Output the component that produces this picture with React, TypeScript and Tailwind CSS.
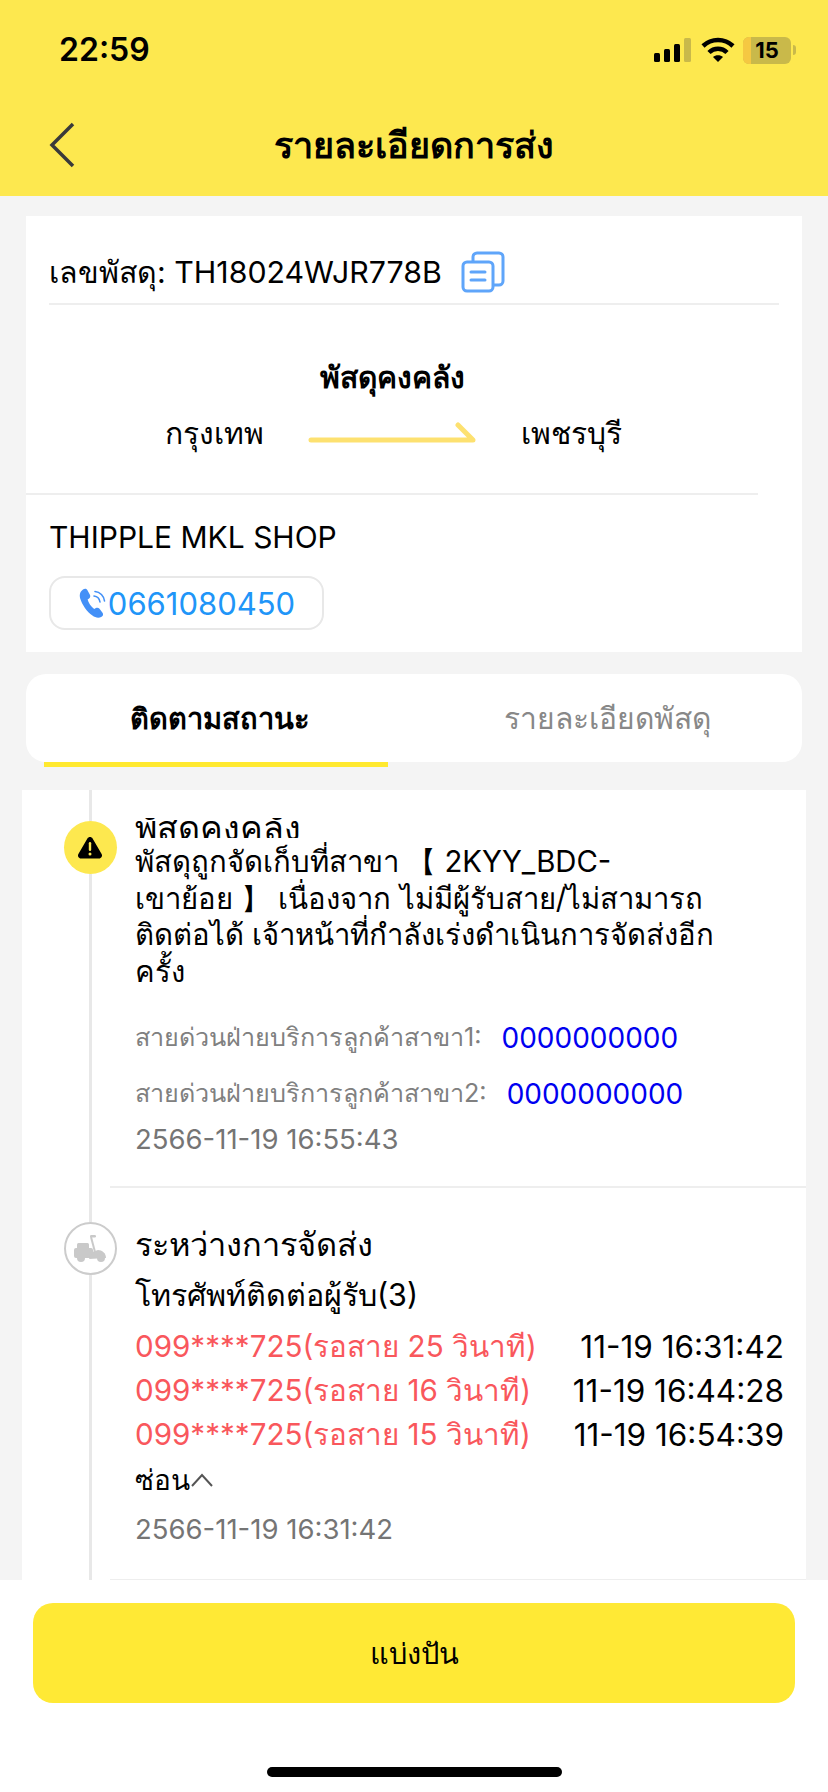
const font = "font-['Inter','Noto_Sans','Liberation_Sans',sans-serif]";

const CopyIcon = () => (
  <svg width="44" height="42" viewBox="0 0 44 42" fill="none" stroke="#5fa5fa" strokeWidth="3">
    <rect x="2" y="11" width="30" height="29" rx="4" />
    <path d="M12 11V6a4 4 0 0 1 4-4h22a4 4 0 0 1 4 4v24a4 4 0 0 1-4 4h-6" />
    <path d="M10 21h14M10 29h14" strokeLinecap="round" />
  </svg>
);

const PhoneIcon = () => (
  <svg width="30" height="30" viewBox="0 0 30 30" fill="none">
    <path
      d="M5 1.500c1.600-1.200 3.400-1 4.300.6l2.600 4.700c.7 1.300.4 2.700-.8 3.600l-1.500 1.100c.8 3.300 3.600 7.400 6.600 9.400l1.700-.9c1.300-.7 2.700-.4 3.600.8l3 4c1 1.500.6 3.100-.9 4-3 1.700-6.300.9-9.200-1.200C9 24 4 16.500 2.200 10.500 1 6.500 2.300 3.300 5 1.500z"
      fill="#4390f7"
    />
    <path d="M16 8c3 .3 5.500 2.800 6 6M17 3.500c5 .4 9 4.500 9.500 9.500" stroke="#4390f7" strokeWidth="1.600" strokeLinecap="round" />
  </svg>
);

const ScooterIcon = () => (
  <svg width="32" height="27" viewBox="0 0 32 27" fill="#c9c9c9">
    <rect x="3" y="8" width="12" height="8" rx="1.500" />
    <rect x="0" y="13" width="19" height="10" rx="2" />
    <circle cx="7" cy="23" r="4" />
    <circle cx="27" cy="23" r="4" />
    <path d="M15 24l3-7 6-2c4 0 8 3 8 8z" />
    <path d="M17 2l4 15" stroke="#c9c9c9" strokeWidth="2" fill="none" />
    <rect x="16" y="0" width="6" height="2.500" rx="1.200" />
  </svg>
);

const WarningIcon = () => (
  <svg width="26" height="24" viewBox="0 0 26 24">
    <path
      d="M10.400 2.500c1.200-2 4-2 5.200 0l9 15.500c1.200 2-.3 4.500-2.600 4.500H4c-2.300 0-3.800-2.500-2.600-4.500z"
      fill="#000"
    />
    <rect x="11.800" y="6" width="2.400" height="9" rx="1.200" fill="#fde84f" />
    <circle cx="13" cy="18" r="1.500" fill="#fde84f" />
  </svg>
);

const StatusIcons = () => (
  <div className="flex items-center">
    <svg width="38" height="24" viewBox="0 0 38 24" className="mr-[9px]">
      <rect x="0" y="15" width="6" height="9" rx="1.500" fill="#000" />
      <rect x="10" y="11" width="6" height="13" rx="1.500" fill="#000" />
      <rect x="20" y="6" width="6" height="18" rx="1.500" fill="#000" />
      <rect x="30" y="0" width="7" height="24" rx="1.500" fill="#c9b94a" />
    </svg>
    <svg width="34" height="26" viewBox="0 0 34 26" fill="none" stroke="#000" strokeWidth="4.500" className="mr-[8px]">
      <path d="M2 9c8.500-8 21.500-8 30 0" />
      <path d="M8 15.500c5-5 13-5 18 0" />
      <path d="M17 25l-5-5c2.500-2.500 7.500-2.500 10 0z" fill="#000" stroke="none" />
    </svg>
    <div className="flex items-center">
      <div className="relative flex h-[27px] w-[48px] items-center justify-center overflow-hidden rounded-[6px] bg-[#c9b94a]">
        <div className="absolute inset-y-0 left-0 w-[8px] bg-[#f5c842]" />
        <span className="relative text-[22px] leading-none font-bold text-black">15</span>
      </div>
      <div className="ml-[2px] h-[10px] w-[3px] rounded-r-full bg-[#c9b94a]" />
    </div>
  </div>
);

const CallRow = ({ left, right }: { left: string; right: string }) => (
  <div className="flex h-[44px] items-center justify-between pr-[22px] leading-none">
    <span className="text-[29.6px] text-[#f9575c]">{left}</span>
    <span className="text-[31.5px] text-black">{right}</span>
  </div>
);

export default function App() {
  return (
    <div className={`flex h-[1792px] w-[828px] flex-col overflow-hidden bg-[#f4f4f4] ${font}`}>
      <header className="h-[196px] shrink-0 bg-[#fde84f]">
        <div className="flex h-[100px] items-center justify-between pr-[32px] pl-[59px]">
          <span className="text-[32px] leading-none font-semibold text-black">22:59</span>
          <StatusIcons />
        </div>
        <div className="relative flex h-[96px] items-center justify-center pb-[6px]">
          <svg width="26" height="46" viewBox="0 0 26 46" fill="none" stroke="#3a3a3a" strokeWidth="3.500" className="absolute top-[22px] left-[49px]">
            <path d="M24 2L3 23l21 21" />
          </svg>
          <h1 className="text-[36px] leading-none font-bold text-black">รายละเอียดการส่ง</h1>
        </div>
      </header>

      <main className="min-h-0 flex-1 overflow-hidden">
        <section className="mx-[26px] mt-[20px] h-[436px] bg-white">
          <div className="mx-[23px] flex h-[89px] items-center border-b-2 border-[#eeeeee] pt-[25px] text-[30.3px] leading-none text-black">
            <span>เลขพัสดุ: TH18024WJR778B</span>
            <span className="ml-[19px]">
              <CopyIcon />
            </span>
          </div>
          <div className="w-[732px] border-b-2 border-[#eeeeee]">
            <div className="flex h-[188px] flex-col items-center pt-[54px]">
              <div className="text-[30px] leading-[36px] font-semibold text-black">พัสดุคงคลัง</div>
              <div className="mt-[20px] flex items-center text-[30px] leading-[36px] font-medium text-black">
                <span className="w-[98px] text-center">กรุงเทพ</span>
                <svg width="168" height="22" viewBox="0 0 168 22" fill="none" className="mx-[45px]">
                  <path d="M3 18h162L150 3" stroke="#fde170" strokeWidth="5" strokeLinecap="round" strokeLinejoin="round" />
                </svg>
                <span className="w-[98px] text-center">เพชรบุรี</span>
              </div>
            </div>
          </div>
          <div className="px-[23px]">
            <div className="mt-[24px] text-[30px] leading-[36px] text-black">THIPPLE MKL SHOP</div>
            <div className="mt-[21px] flex h-[54px] w-[275px] items-center justify-center rounded-[16px] border-2 border-[#e8e8e8] text-[31px] leading-none text-[#2095f8]">
              <PhoneIcon />
              <span>0661080450</span>
            </div>
          </div>
        </section>

        <nav className="relative mx-[26px] mt-[22px] flex h-[88px] rounded-[20px] bg-white">
          <div className="flex w-[392px] items-center justify-center pr-[4px] text-[29px] leading-none font-bold text-black">ติดตามสถานะ</div>
          <div className="flex flex-1 items-center justify-center pr-[5px] text-[30px] leading-none font-medium text-[#888888]">รายละเอียดพัสดุ</div>
          <div className="absolute top-full left-[18px] h-[5px] w-[344px] bg-[#ffe92f]" />
        </nav>

        <section className="mx-[22px] mt-[28px] bg-white">
          <div className="flex">
            <div className="mr-[-7px] ml-[41px] flex w-[54px] shrink-0 flex-col items-center">
              <div className="h-[31px] w-[3px] bg-[#e8e8e8]" />
              <div className="flex h-[53px] w-[53px] items-center justify-center rounded-full bg-[#fde84f]">
                <WarningIcon />
              </div>
              <div className="w-[3px] flex-1 bg-[#e8e8e8]" />
            </div>
            <div className="h-[398px] flex-1 border-b-2 border-[#eeeeee] pl-[25px]">
              <div className="mt-[28px] h-[20px] overflow-hidden text-[34px] leading-[19px] text-black">พัสดุคงคลัง</div>
              <div className="mt-[6px] text-[29.3px] leading-[36.5px] whitespace-nowrap text-black">
                พัสดุถูกจัดเก็บที่สาขา 【 2KYY_BDC-
                <br />
                เขาย้อย 】 เนื่องจาก ไม่มีผู้รับสาย/ไม่สามารถ
                <br />
                ติดต่อได้ เจ้าหน้าที่กำลังเร่งดำเนินการจัดส่งอีก
                <br />
                ครั้ง
              </div>
              <div className="mt-[20px] flex h-[56px] items-center text-[25.2px] leading-none text-[#808080]">
                สายด่วนฝ่ายบริการลูกค้าสาขา1:
                <span className="ml-[20px] text-[28px] text-[#0000f0]">0000000000</span>
              </div>
              <div className="flex h-[56px] items-center text-[25.2px] leading-none text-[#808080]">
                สายด่วนฝ่ายบริการลูกค้าสาขา2:
                <span className="ml-[20px] text-[28px] text-[#0000f0]">0000000000</span>
              </div>
              <div className="mt-[-1px] text-[27.5px] leading-[36px] text-[#757575]">2566-11-19 16:55:43</div>
            </div>
          </div>

          <div className="flex">
            <div className="mr-[-7px] ml-[41px] flex w-[54px] shrink-0 flex-col items-center">
              <div className="h-[34px] w-[3px] bg-[#e8e8e8]" />
              <div className="flex h-[53px] w-[53px] items-center justify-center rounded-full border-2 border-[#cccccc] bg-white">
                <ScooterIcon />
              </div>
              <div className="w-[3px] flex-1 bg-[#e8e8e8]" />
            </div>
            <div className="h-[392px] flex-1 border-b border-[#eeeeee] pl-[25px]">
              <div className="mt-[36px] text-[32.6px] leading-[40px] font-medium text-black">ระหว่างการจัดส่ง</div>
              <div className="mt-[13px] text-[30.5px] leading-[36px] text-black">โทรศัพท์ติดต่อผู้รับ(3)</div>
              <div className="mt-[12px]">
                <CallRow left="099****725(รอสาย 25 วินาที)" right="11-19 16:31:42" />
                <CallRow left="099****725(รอสาย 16 วินาที)" right="11-19 16:44:28" />
                <CallRow left="099****725(รอสาย 15 วินาที)" right="11-19 16:54:39" />
              </div>
              <div className="mt-[5px] flex items-center text-[28px] leading-[36px] text-black">
                ซ่อน
                <svg width="24" height="14" viewBox="0 0 24 14" fill="none" stroke="#555555" strokeWidth="2">
                  <path d="M2 13L12 2l10 11" />
                </svg>
              </div>
              <div className="mt-[13px] text-[27.5px] leading-[36px] text-[#757575]">2566-11-19 16:31:42</div>
            </div>
          </div>
        </section>
      </main>

      <footer className="flex h-[212px] shrink-0 flex-col items-center bg-white">
        <button className="mt-[23px] flex h-[100px] w-[762px] items-center justify-center rounded-[20px] bg-[#ffe935] text-[29px] leading-none text-black">
          แบ่งปัน
        </button>
        <div className="mt-[64px] h-[10px] w-[295px] rounded-full bg-black" />
      </footer>
    </div>
  );
}
